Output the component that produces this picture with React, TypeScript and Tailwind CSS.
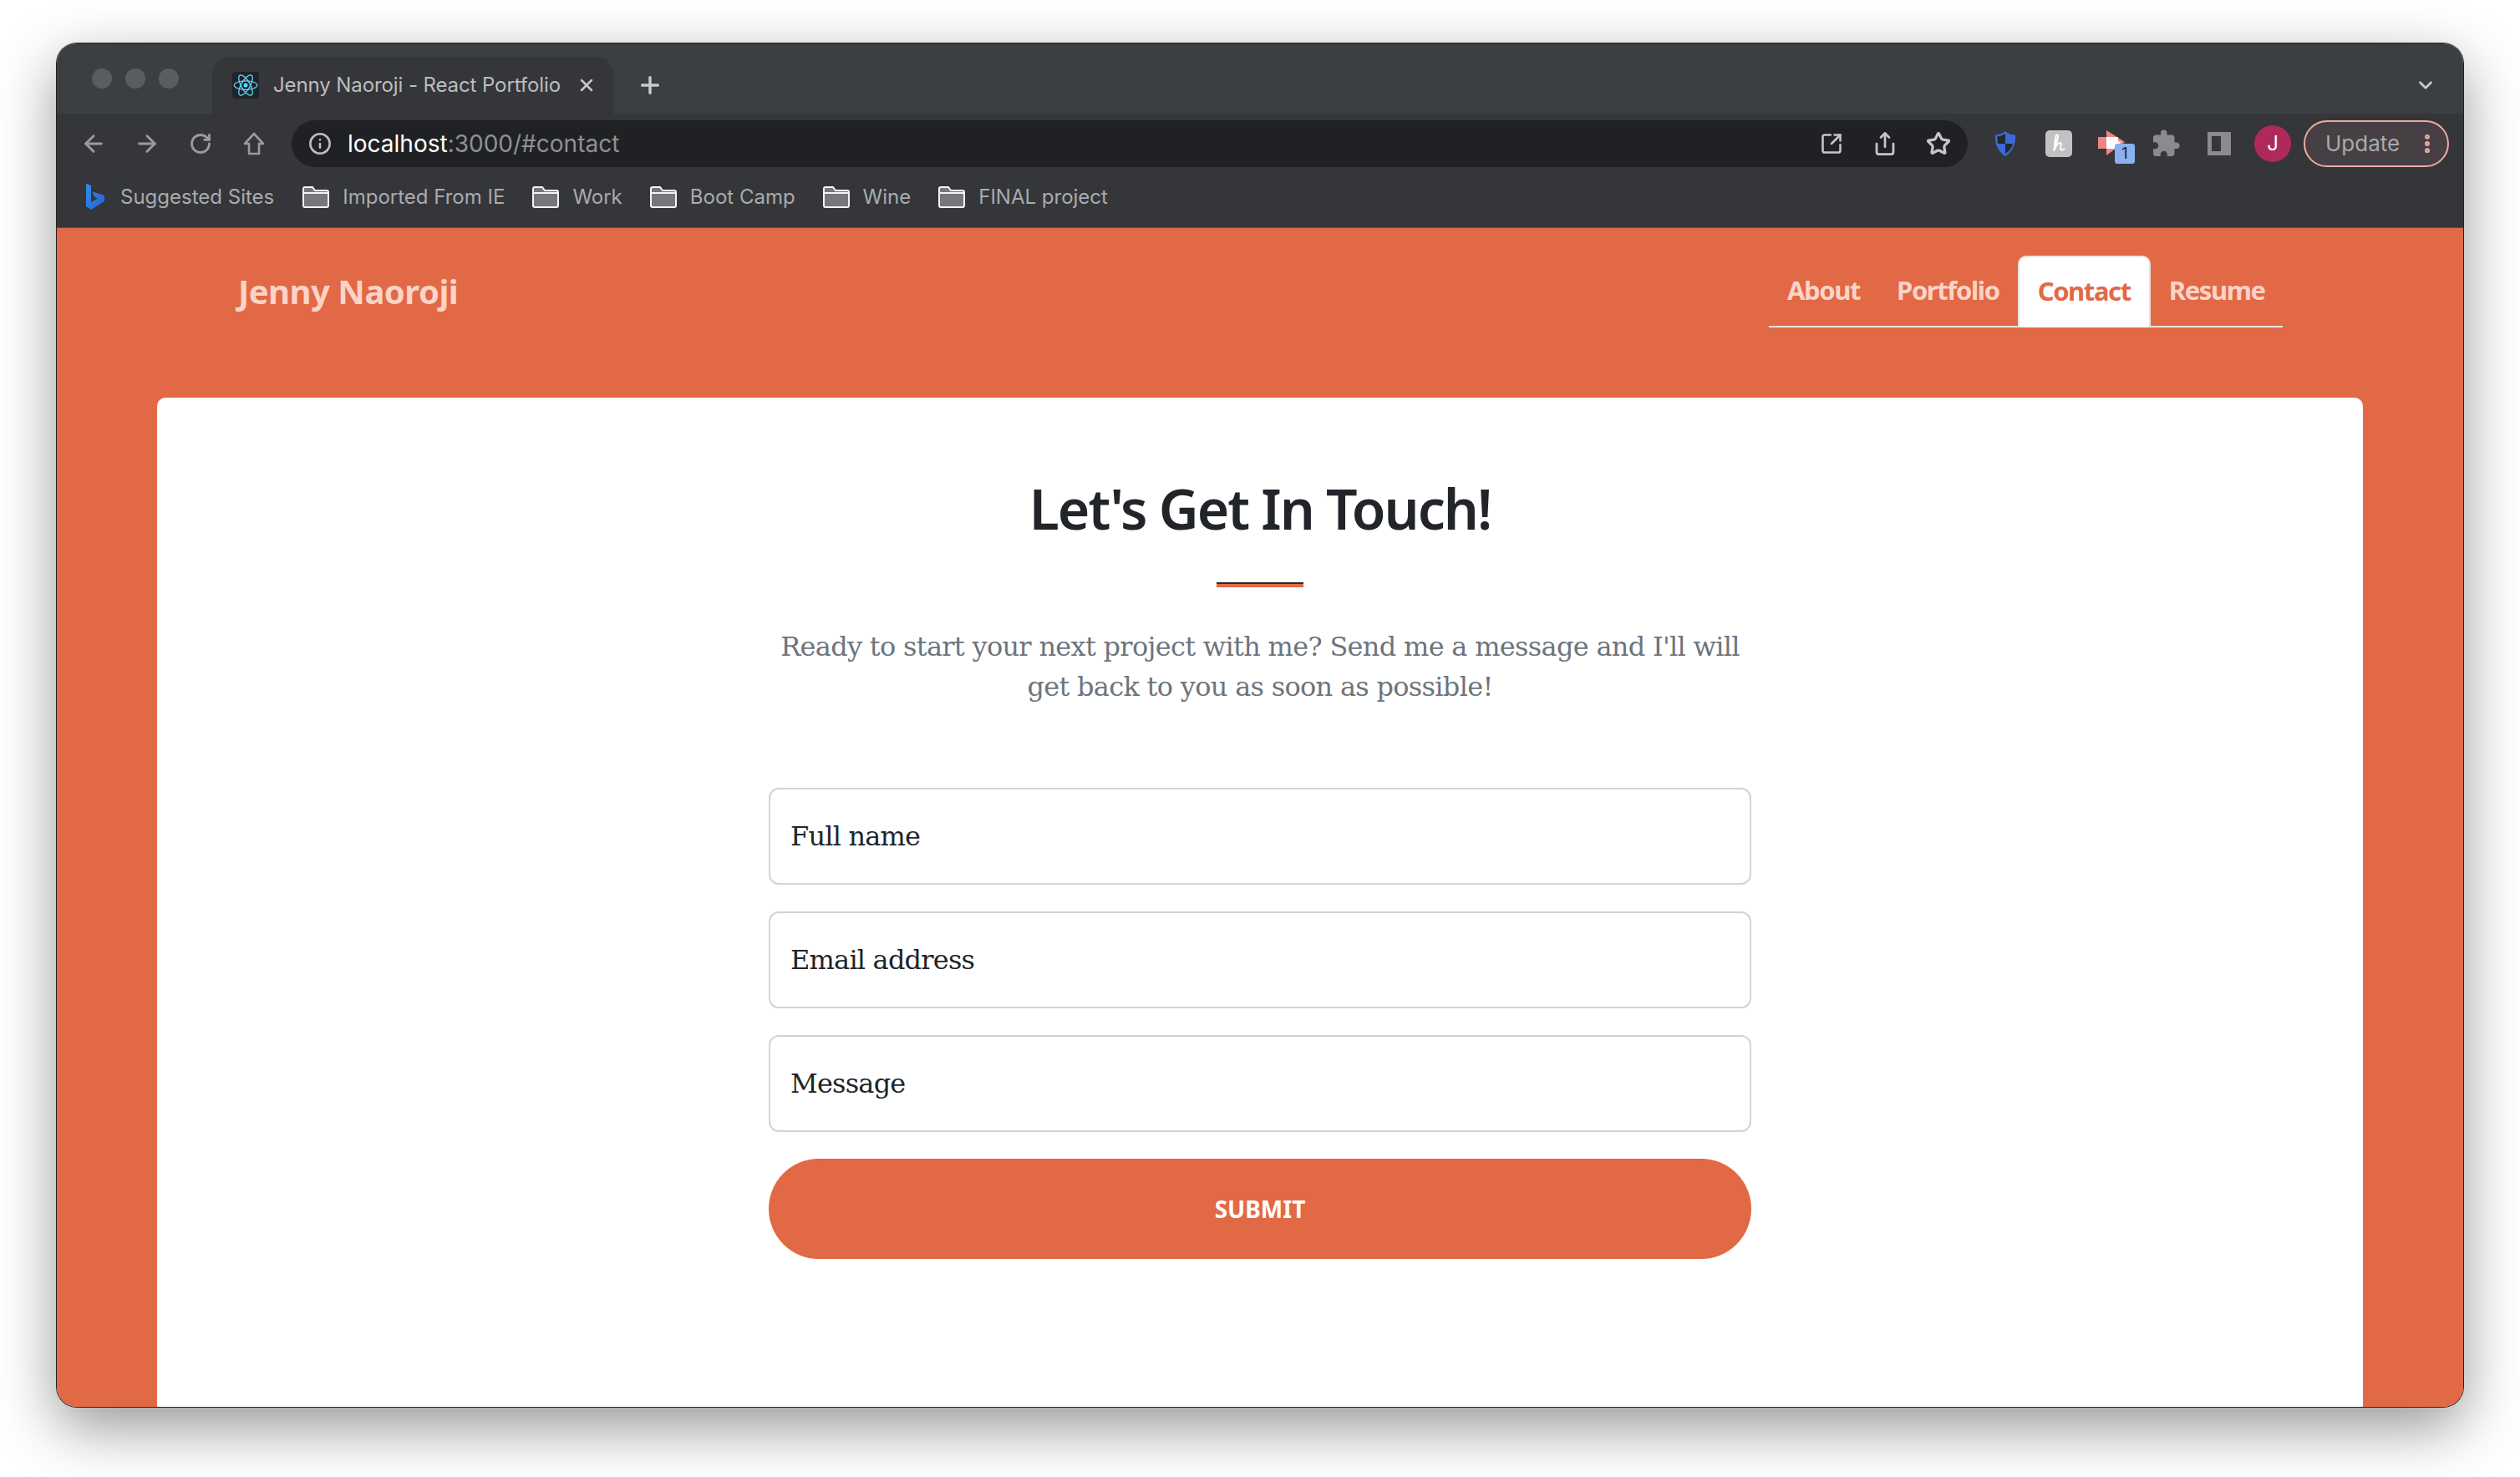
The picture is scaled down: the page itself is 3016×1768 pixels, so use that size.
import React from 'react';
import { ArrowLeft, ArrowRight, RotateCw, Info, X, Plus, ChevronDown, SquareArrowOutUpRight, Share, Star, EllipsisVertical } from 'lucide-react';
import { MdExtension } from 'react-icons/md';

const headFont = "font-['Noto_Sans',sans-serif]";
const serifFont = "font-['DejaVu_Serif',serif]";

function FolderIcon() {
  return (
    <svg width="32" height="26" viewBox="0 0 32 26" className="shrink-0">
      <path d="M1 3a2 2 0 0 1 2-2h9l3 4h14a2 2 0 0 1 2 2v16a2 2 0 0 1-2 2H3a2 2 0 0 1-2-2z" fill="#75777a" stroke="#f4f4f4" strokeWidth="2" />
      <path d="M1 8h30" stroke="#f4f4f4" strokeWidth="2" />
    </svg>
  );
}

function ReactLogo() {
  return (
    <div className="w-8 h-8 rounded bg-[#20232a] flex items-center justify-center shrink-0">
      <svg width="30" height="30" viewBox="-12 -12 24 24" fill="none" stroke="#61dafb" strokeWidth="1">
        <circle r="2" fill="#61dafb" stroke="none" />
        <ellipse rx="11" ry="4.2" />
        <ellipse rx="11" ry="4.2" transform="rotate(60)" />
        <ellipse rx="11" ry="4.2" transform="rotate(120)" />
      </svg>
    </div>
  );
}

function BingLogo() {
  return (
    <svg width="24" height="32" viewBox="0 0 24 32" className="shrink-0">
      <defs>
        <linearGradient id="bing" x1="0" y1="0" x2="1" y2="1">
          <stop offset="0" stopColor="#2f8fe8" />
          <stop offset="1" stopColor="#2a5fd8" />
        </linearGradient>
      </defs>
      <path d="M1 0l6 2v20l8-4.500-4-2-2.400-6L23 14v7L7 31l-6-4z" fill="url(#bing)" />
    </svg>
  );
}

function HomeIcon() {
  return (
    <svg width="26" height="28" viewBox="0 0 26 28" fill="none" stroke="#9a9b9e" strokeWidth="2.6" strokeLinejoin="round">
      <path d="M13 2L2 14h5v12h12V14h5z" />
    </svg>
  );
}

function ShieldIcon() {
  return (
    <svg width="26" height="30" viewBox="0 0 26 30">
      <path d="M13 0c3 3 7 4 12 4.500 1 10-3 20-12 25.500C4 24.500 0 14.500 1 4.500 6 4 10 3 13 0z" fill="#3b69d8" />
      <path d="M13 3v12H4c-.5-3-.6-6-.5-8.500C7 6 10.500 5 13 3zM13 15h9c-1 5-4 9-9 12z" fill="#26282c" />
    </svg>
  );
}

function HoneyIcon() {
  return (
    <svg width="32" height="32" viewBox="0 0 32 32">
      <rect width="32" height="32" rx="5" fill="#c2c2c2" />
      <path d="M10 24c2-6 5-13 5-17 0-2-2-2-2.500 0-.8 4-1.500 10-1.500 16 2-5 4-8 6.500-8 3 0 0 5 .5 7 .5 2 3 2 4.500 0" fill="none" stroke="#ffffff" strokeWidth="2" strokeLinecap="round" strokeLinejoin="round" />
    </svg>
  );
}

function VideoExt() {
  return (
    <div className="relative w-8 h-8">
      <svg width="32" height="30" viewBox="0 0 32 30" className="absolute -left-[1px] top-0">
        <path d="M10 0l22 14-22 16v-8H0V8h10z" fill="#ef8582" />
        <path d="M10 8h14v5l4 1-4 3v5H10z" fill="#ffffff" />
      </svg>
      <div className="absolute left-[19px] top-[16px] w-6 h-6 rounded-[3px] bg-[#8ab0ee] text-[#202124] text-[18px] leading-6 text-center font-['Inter',sans-serif]">1</div>
    </div>
  );
}

function Bookmark({ label }: { label: string }) {
  return (
    <div className="flex items-center gap-4">
      <FolderIcon />
      <span className="text-[#a9abae] text-[24px] leading-none">{label}</span>
    </div>
  );
}

function ToolbarSlot({ children }: { children: React.ReactNode }) {
  return <div className="w-16 flex items-center justify-center shrink-0">{children}</div>;
}

function Field({ label }: { label: string }) {
  return (
    <div className={`h-[116px] border-2 border-[#ced4da] rounded-[12px] bg-white flex items-center px-6 text-[#212529] text-[32px] tracking-[-0.8px] ${serifFont}`}>
      {label}
    </div>
  );
}

export default function App() {
  const navItems = ['About', 'Portfolio', 'Contact', 'Resume'];

  return (
    <div className="w-[3016px] h-[1768px] bg-white pt-[52px] pl-[68px] overflow-hidden">
      <div className="w-[2880px] h-[1632px] rounded-[24px] overflow-hidden flex flex-col shadow-[0_0_0_1px_#222,0_24px_70px_rgba(0,0,0,0.42)] font-['Inter',sans-serif]">
        {/* Tab strip */}
        <div className="h-[84px] bg-[#3c3f41] flex items-end shrink-0 pl-[42px] pr-6">
          <div className="flex gap-4 w-[144px] h-full items-center shrink-0">
            <span className="w-6 h-6 rounded-full bg-[#5a5d60]" />
            <span className="w-6 h-6 rounded-full bg-[#5a5d60]" />
            <span className="w-6 h-6 rounded-full bg-[#5a5d60]" />
          </div>
          <div className="w-[480px] h-[68px] bg-[#35363a] rounded-t-[20px] flex items-center pl-6 pr-5 shrink-0">
            <ReactLogo />
            <span className="ml-[17px] text-[#bcbdbf] text-[24px] leading-none tracking-[-0.1px] whitespace-nowrap">Jenny Naoroji - React Portfolio</span>
            <X className="ml-auto text-[#c4c6c8]" size={24} strokeWidth={2.5} />
          </div>
          <div className="h-[68px] flex items-center ml-[28px]">
            <Plus className="text-[#c9cbcd]" size={32} strokeWidth={2.6} />
          </div>
          <div className="h-[68px] flex items-center ml-auto pr-[8px]">
            <ChevronDown className="text-[#c9cbcd]" size={26} strokeWidth={2.4} />
          </div>
        </div>

        {/* Address bar */}
        <div className="h-[76px] bg-[#35363a] flex items-start pt-2 pl-3 pr-[17px] shrink-0">
          <div className="flex h-14 items-center shrink-0">
            <ToolbarSlot><ArrowLeft className="text-[#9a9b9e]" size={32} strokeWidth={2.2} /></ToolbarSlot>
            <ToolbarSlot><ArrowRight className="text-[#9a9b9e]" size={32} strokeWidth={2.2} /></ToolbarSlot>
            <ToolbarSlot><RotateCw className="text-[#9a9b9e]" size={28} strokeWidth={2.4} /></ToolbarSlot>
            <ToolbarSlot><HomeIcon /></ToolbarSlot>
          </div>
          <div className="w-[2006px] h-14 ml-[13px] bg-[#202124] rounded-full flex items-center pl-[20px] pr-[3px] shrink-0">
            <Info className="text-[#bdbfc1]" size={28} strokeWidth={2.2} />
            <span className="ml-[19px] text-[28px] leading-none text-[#8f9194] whitespace-nowrap"><span className="text-white">localhost</span>:3000/#contact</span>
            <div className="ml-auto flex items-center">
              <ToolbarSlot><SquareArrowOutUpRight className="text-[#c4c6c8]" size={28} strokeWidth={2.2} /></ToolbarSlot>
              <ToolbarSlot><Share className="text-[#c4c6c8]" size={30} strokeWidth={2.2} /></ToolbarSlot>
              <ToolbarSlot><Star className="text-[#c4c6c8]" size={30} strokeWidth={2.6} /></ToolbarSlot>
            </div>
          </div>
          <div className="flex h-14 items-center ml-[13px] shrink-0">
            <ToolbarSlot><ShieldIcon /></ToolbarSlot>
            <ToolbarSlot><HoneyIcon /></ToolbarSlot>
            <ToolbarSlot><VideoExt /></ToolbarSlot>
            <ToolbarSlot><MdExtension className="text-[#8a8b8e]" size={36} /></ToolbarSlot>
            <ToolbarSlot>
              <div className="w-7 h-7 border-[5px] border-r-[12px] border-[#8a8b8e]" />
            </ToolbarSlot>
            <ToolbarSlot>
              <div className="w-11 h-11 rounded-full bg-[#ae2a5c] text-white text-[24px] leading-[44px] text-center">J</div>
            </ToolbarSlot>
          </div>
          <div className="w-[174px] h-14 ml-[5px] rounded-full border-2 border-[#eeaba0] bg-[#463f43] flex items-center pl-6 pr-[10px] shrink-0">
            <span className="text-[#a9abae] text-[26px] leading-none">Update</span>
            <EllipsisVertical className="ml-auto text-[#eeaba0]" size={28} strokeWidth={3} />
          </div>
        </div>

        {/* Bookmarks */}
        <div className="h-[61px] bg-[#35363a] border-b border-[#55585b] flex items-center pb-[13px] pl-[34px] gap-[33px] shrink-0">
          <div className="flex items-center gap-[18px] mr-[1px]">
            <BingLogo />
            <span className="text-[#a9abae] text-[24px] leading-none">Suggested Sites</span>
          </div>
          <Bookmark label="Imported From IE" />
          <Bookmark label="Work" />
          <Bookmark label="Boot Camp" />
          <Bookmark label="Wine" />
          <Bookmark label="FINAL project" />
        </div>

        {/* Page */}
        <div className={`flex-1 bg-[#e26945] flex flex-col min-h-0 ${headFont}`}>
          <header className="h-[203px] shrink-0 flex items-start justify-between pl-[217px] pr-[216px]">
            <div className="mt-[52px] text-[#fbd3c7] text-[40px] leading-[48px] font-bold tracking-[-0.5px]">Jenny Naoroji</div>
            <nav className="mt-[33px] h-[86px] w-[615px] flex border-b-2 border-[#e9e4e2] text-[31px] font-bold tracking-[-1.4px]">
              {navItems.map((item) => (
                <div
                  key={item}
                  className={`h-[86px] px-[22px] flex items-center whitespace-nowrap rounded-t-[10px] pb-[4px] ${item === 'Contact' ? 'bg-white text-[#e26945] border-2 border-b-0 border-[#e9e4e2] px-[20px]' : 'text-[#fbd3c7]'}`}
                >
                  {item}
                </div>
              ))}
            </nav>
          </header>

          <main className="flex-1 mx-[120px] bg-white rounded-t-[10px] flex flex-col items-center pt-[92px]">
            <h1 className="text-[#212529] text-[66px] leading-[80px] font-semibold tracking-[-2px]">Let's Get In Touch!</h1>
            <div className="w-[104px] h-[6px] mt-[49px] border-t-2 border-[#2b2b2b] bg-[#e26945]" />
            <p className={`w-[1170px] mt-[47px] text-center text-[#6c757d] text-[32px] leading-[48px] tracking-[-0.7px] ${serifFont}`}>
              Ready to start your next project with me? Send me a message and I'll will get back to you as soon as possible!
            </p>
            <div className="w-[1176px] mt-[97px] flex flex-col gap-8">
              <Field label="Full name" />
              <Field label="Email address" />
              <Field label="Message" />
              <button className="h-[120px] rounded-full bg-[#e26945] text-white text-[28px] font-bold">SUBMIT</button>
            </div>
          </main>
        </div>
      </div>
    </div>
  );
}
